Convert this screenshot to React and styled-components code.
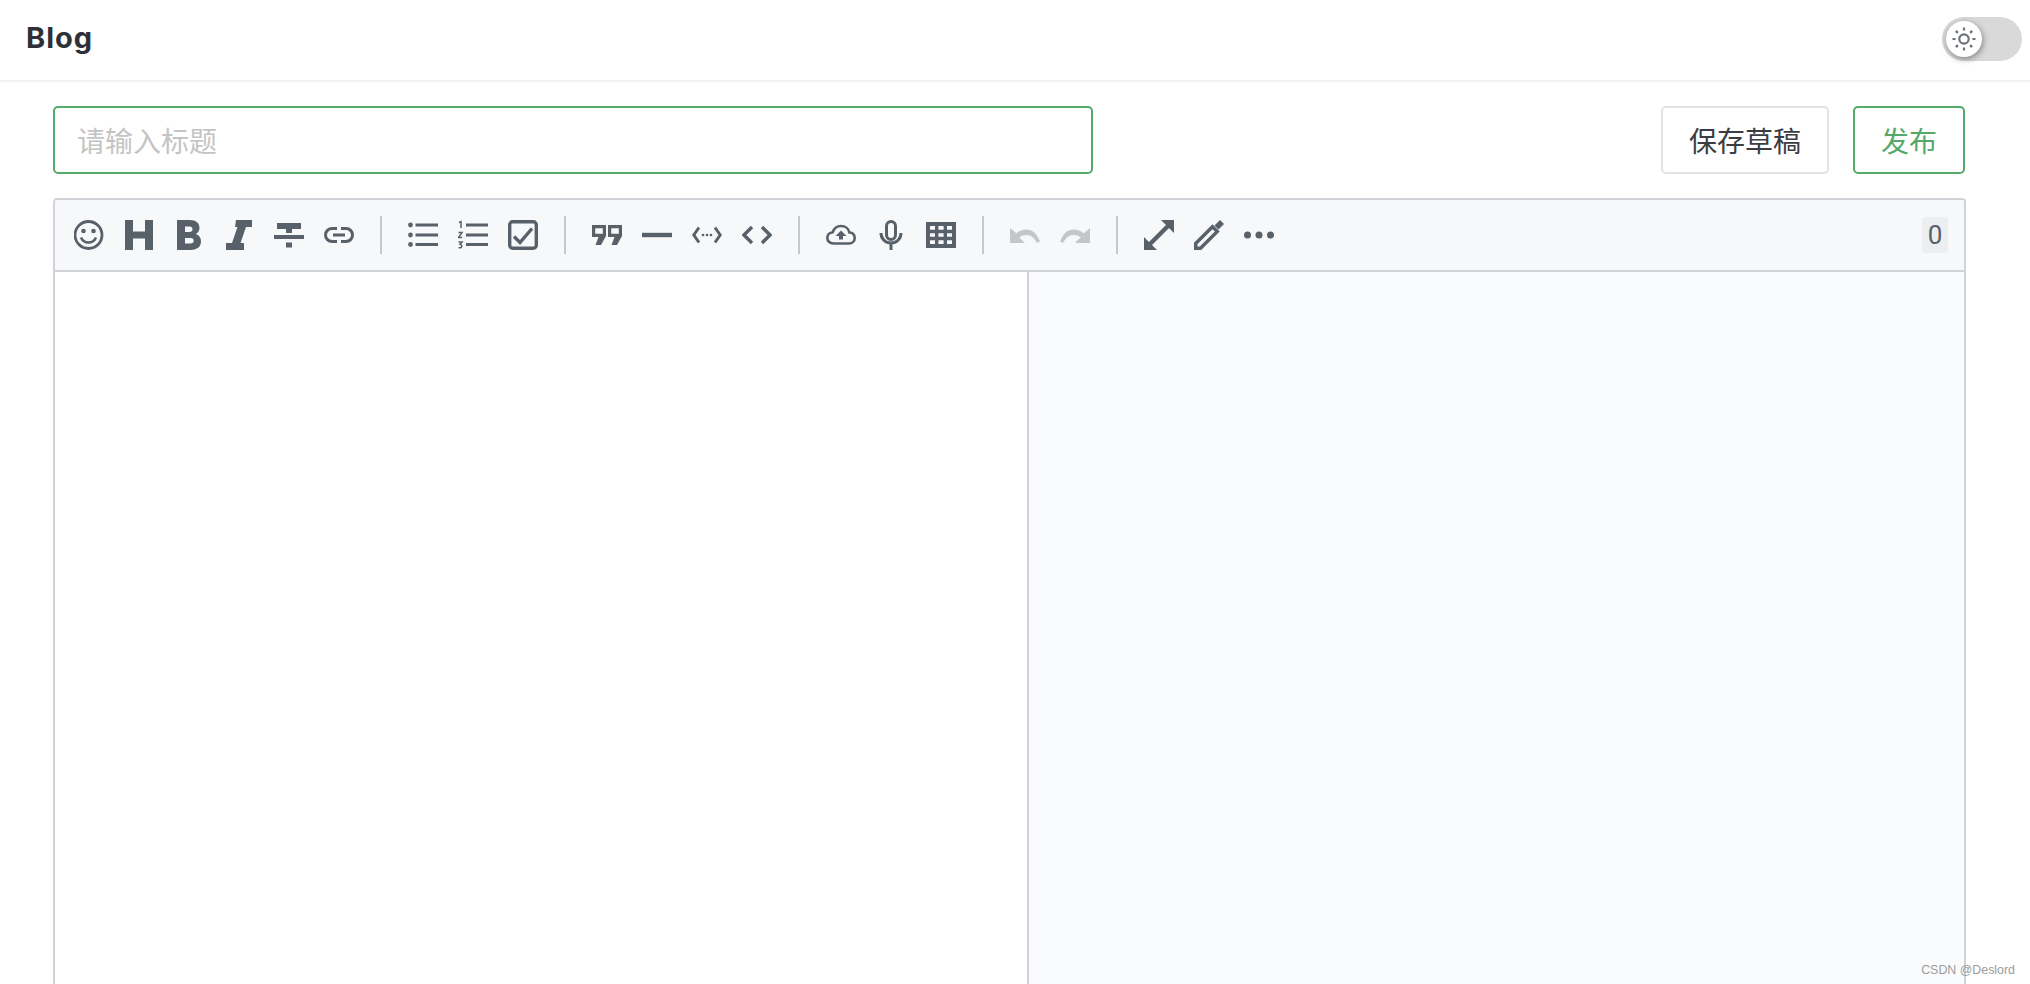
import React from 'react';
import styled, { createGlobalStyle } from 'styled-components';

const GlobalStyle = createGlobalStyle`
  html, body {
    margin: 0;
    padding: 0;
    background: #fff;
    font-family: Inter, "Noto Sans CJK SC", sans-serif;
  }
  * { box-sizing: border-box; }
`;

const Page = styled.div`
  position: relative;
  height: 100vh;
  overflow: hidden;
  display: flex;
  flex-direction: column;
`;

const Header = styled.header`
  height: 82px;
  flex-shrink: 0;
  display: flex;
  align-items: center;
  justify-content: space-between;
  padding: 0 8px 3px 26px;
  border-bottom: 2px solid #f0f0f5;
`;

const Logo = styled.h1`
  margin: 0 0 2px;
  font-size: 29px;
  font-weight: 700;
  letter-spacing: 1px;
  color: #2d3036;
`;

const ThemeToggle = styled.div`
  width: 80px;
  height: 44px;
  border-radius: 22px;
  background: #d9d9d9;
  padding: 4px;
`;

const Knob = styled.div`
  width: 36px;
  height: 36px;
  border-radius: 50%;
  background: #fff;
  color: #6c7178;
  display: flex;
  align-items: center;
  justify-content: center;
  box-shadow: 1px 2px 6px rgba(0, 0, 0, 0.4);
`;

const Main = styled.main`
  flex: 1;
  display: flex;
  flex-direction: column;
  gap: 24px;
  padding: 24px 64px 0 53px;
`;

const TitleRow = styled.div`
  display: flex;
  align-items: center;
  height: 68px;
  flex-shrink: 0;
`;

const TitleInput = styled.input`
  width: 1040px;
  height: 68px;
  margin-right: auto;
  padding: 0 22px;
  border: 2px solid #55a96a;
  border-radius: 5px;
  outline: none;
  font-family: "Noto Sans CJK SC", sans-serif;
  font-size: 28px;
  color: #2d3036;
  &::placeholder { color: #c4c4c4; }
`;

const Button = styled.button`
  height: 68px;
  width: ${p => (p.$primary ? '112px' : '168px')};
  margin-left: ${p => (p.$primary ? '24px' : '0')};
  margin-right: ${p => (p.$primary ? '1px' : '0')};
  background: #fff;
  border: 2px solid ${p => (p.$primary ? '#55a96a' : '#e1e1e6')};
  border-radius: 5px;
  font-family: "Noto Sans CJK SC", sans-serif;
  font-size: 28px;
  color: ${p => (p.$primary ? '#55a96a' : '#3a3d42')};
`;

const Editor = styled.section`
  flex-shrink: 0;
  height: 1000px;
  display: flex;
  flex-direction: column;
  border: 2px solid #d1d3d8;
  border-radius: 4px;
`;

const Toolbar = styled.div`
  height: 72px;
  flex-shrink: 0;
  display: flex;
  align-items: center;
  padding: 0 16px 0 9px;
  background: #f6f8fa;
  border-bottom: 2px solid #d1d3d8;
  border-radius: 4px 4px 0 0;
`;

const ToolButton = styled.span`
  width: 50px;
  height: 30px;
  flex-shrink: 0;
  display: flex;
  justify-content: center;
  color: ${p => (p.$disabled ? '#c4c6c8' : '#586069')};
`;

const Divider = styled.span`
  width: 2px;
  height: 38px;
  margin: 0 16px;
  flex-shrink: 0;
  background: #c6c8cb;
`;

const Counter = styled.span`
  margin-left: auto;
  width: 26px;
  height: 36px;
  border-radius: 4px;
  background: #eceef0;
  color: #586069;
  font-family: Roboto, sans-serif;
  font-size: 26px;
  line-height: 36px;
  text-align: center;
`;

const Panes = styled.div`
  flex: 1;
  display: flex;
`;

const EditPane = styled.div`
  width: 972px;
  background: #fff;
  border-right: 2px solid #d1d3d8;
  flex-shrink: 0;
  box-sizing: content-box;
`;

const PreviewPane = styled.div`
  flex: 1;
  background: #fafbfc;
`;

const Watermark = styled.span`
  position: absolute;
  right: 15px;
  bottom: 7px;
  font-family: "Liberation Sans", sans-serif;
  font-size: 12.4px;
  color: #9c9c9c;
`;

const Svg = styled.svg`
  display: block;
  fill: currentColor;
`;

const Icon = ({ children, size = 30, view = 30 }) => (
  <Svg width={size} height={size} viewBox={`0 0 ${view} ${view}`}>{children}</Svg>
);

const line = { fill: 'none', stroke: 'currentColor', strokeWidth: 3 };

const icons = {
  emoji: (
    <>
      <circle cx="14.500" cy="15" r="13.500" {...line} strokeWidth="2.800" />
      <circle cx="9.500" cy="11" r="2.300" />
      <circle cx="19.500" cy="11" r="2.300" />
      <path d="M7 17.500c1.500 3.500 4.500 5 7.500 5s6-1.500 7.500-5" {...line} strokeWidth="2.500" />
    </>
  ),
  heading: <path d="M1 0h8v11.500h12V0h8v30h-8V18.500H9V30H1z" />,
  bold: (
    <path
      fillRule="evenodd"
      d="M3 0h13c6 0 9.500 3.200 9.500 7.800 0 2.900-1.400 5-3.800 6.200 3.300 1.100 5.300 3.800 5.300 7.300C27 26.700 23 30 17 30H3zM11 6.500V12h4.500c2 0 3-1 3-2.800s-1-2.700-3-2.700zM11 18v5.500h5.500c2 0 3.200-1 3.200-2.800S18.500 18 16.500 18z"
    />
  ),
  italic: <path d="M12 0h16v7h-6l-5.500 16H20v7H2v-7h6l5.500-16H11z" />,
  strike: (
    <>
      <path d="M3 3h24v6H18v4h-6V9H3z" />
      <rect x="0" y="15" width="30" height="4" />
      <rect x="12" y="22.500" width="6" height="5" />
    </>
  ),
  link: (
    <>
      <path d="M13 8.500H8a6.500 6.500 0 0 0 0 13h5M17 8.500h5a6.500 6.500 0 0 1 0 13h-5" {...line} />
      <path d="M9 15h12" {...line} />
    </>
  ),
  list: (
    <>
      <circle cx="2.500" cy="5" r="2.400" />
      <circle cx="2.500" cy="15" r="2.400" />
      <circle cx="2.500" cy="24.500" r="2.400" />
      <path d="M7.500 5H30M7.500 15H30M7.500 24.500H30" {...line} />
    </>
  ),
  ordered: (
    <>
      <path d="M8 5h22M8 15h22M8 24.500h22" {...line} />
      <path d="M1 2.500l2-.8V8M.5 12.500h3.500l-3.500 5h3.700M.5 22h3.500l-1.800 2.200c2 0 2 3.500 0 3.500H.5" {...line} strokeWidth="1.500" />
    </>
  ),
  check: (
    <>
      <rect x="1.700" y="1.700" width="26.600" height="26.600" rx="3" {...line} strokeWidth="3.400" />
      <path d="M6 16.500l6 6 12-14" {...line} strokeWidth="3.400" />
    </>
  ),
  quote: (
    <path
      fillRule="evenodd"
      d="M0 5h14v11l-5 9H3.500l3-8H0zM3.200 8.200v5.600h7.600V8.200zM16 5h14v11l-5 9h-5.500l3-8H16zM19.200 8.200v5.600h7.600V8.200z"
    />
  ),
  hr: <rect x="0" y="12.800" width="30" height="4.400" />,
  inline: (
    <>
      <path d="M7 7.500L1.800 15 7 22.500M23 7.500L28.200 15 23 22.500" {...line} />
      <circle cx="11" cy="15" r="1.300" />
      <circle cx="15" cy="15" r="1.300" />
      <circle cx="19" cy="15" r="1.300" />
    </>
  ),
  code: <path d="M10 7L2 15l8 8M20 7l8 8-8 8" {...line} strokeWidth="3.400" />,
  upload: (
    <>
      <path
        d="M7.500 23.500C3.500 23.500 1.300 20.700 1.300 18c0-3.200 2.300-5.500 5.400-5.800C8 8.500 11 6 15 6c4.600 0 7.700 3 8.400 6.500 3.200.2 5.300 2.400 5.300 5.500 0 3-2.300 5.500-5.700 5.500z"
        {...line}
        strokeWidth="2.600"
      />
      <path d="M15 10.500l5.500 5.500H17v3.500h-4V16H9.500z" />
    </>
  ),
  mic: (
    <>
      <rect x="10.500" y="1.500" width="9" height="18" rx="4.500" {...line} />
      <path d="M5 13c0 6 4.500 10 10 10s10-4 10-10M15 23v7" {...line} />
    </>
  ),
  table: (
    <>
      <rect x="2" y="4" width="26" height="22" {...line} strokeWidth="4" />
      <path d="M10.700 3v24M19.300 3v24M1 11.500h28M1 18.500h28" {...line} strokeWidth="3.400" />
    </>
  ),
  undo: <path d="M0 8v15h15l-5.600-5.600C11.500 15.700 14 15 16.500 15c4.500 0 8 3 10.500 8l3-1.500C27 13.500 22.500 9.500 16.500 9.500c-3.800 0-7 1.300-10.200 3.700z" />,
  redo: <path d="M30 8v15H15l5.600-5.600C18.500 15.700 16 15 13.500 15c-4.500 0-8 3-10.500 8l-3-1.500C3 13.500 7.500 9.500 13.500 9.500c3.800 0 7 1.300 10.200 3.700z" />,
  fullscreen: (
    <>
      <path d="M17 0h13v13zM0 17v13h13z" />
      <path d="M6 24L24 6" {...line} strokeWidth="4.400" />
    </>
  ),
  pencil: (
    <>
      <path d="M20.500 5.500L26 0l4 4-5.500 5.500z" />
      <path d="M1.700 23.500L18.500 6.700l4.800 4.800L6.500 28.300H1.700z" {...line} strokeWidth="3.400" />
    </>
  ),
  more: (
    <>
      <circle cx="3.500" cy="15" r="3.500" />
      <circle cx="15" cy="15" r="3.500" />
      <circle cx="26.500" cy="15" r="3.500" />
    </>
  ),
};

const toolbarGroups = [
  ['emoji', 'heading', 'bold', 'italic', 'strike', 'link'],
  ['list', 'ordered', 'check'],
  ['quote', 'hr', 'inline', 'code'],
  ['upload', 'mic', 'table'],
  ['undo', 'redo'],
  ['fullscreen', 'pencil', 'more'],
];

const SunIcon = () => (
  <Icon size={26} view={26}>
    <circle cx="13" cy="13" r="4.700" fill="none" stroke="currentColor" strokeWidth="2.200" />
    <path
      d="M13 1.500v3M13 21.500v3M1.500 13h3M21.500 13h3M4.900 4.900l2 2M19.100 19.100l2 2M4.900 21.100l2-2M19.100 6.900l2-2"
      fill="none"
      stroke="currentColor"
      strokeWidth="2.200"
    />
  </Icon>
);

function App() {
  return (
    <Page>
      <GlobalStyle />
      <Header>
        <Logo>Blog</Logo>
        <ThemeToggle>
          <Knob><SunIcon /></Knob>
        </ThemeToggle>
      </Header>
      <Main>
        <TitleRow>
          <TitleInput placeholder="请输入标题" />
          <Button>保存草稿</Button>
          <Button $primary>发布</Button>
        </TitleRow>
        <Editor>
          <Toolbar>
            {toolbarGroups.map((group, i) => (
              <React.Fragment key={i}>
                {i > 0 && <Divider />}
                {group.map(name => (
                  <ToolButton key={name} $disabled={name === 'undo' || name === 'redo'}>
                    <Icon>{icons[name]}</Icon>
                  </ToolButton>
                ))}
              </React.Fragment>
            ))}
            <Counter>0</Counter>
          </Toolbar>
          <Panes>
            <EditPane />
            <PreviewPane />
          </Panes>
        </Editor>
      </Main>
      <Watermark>CSDN @Deslord</Watermark>
    </Page>
  );
}

export default App;
